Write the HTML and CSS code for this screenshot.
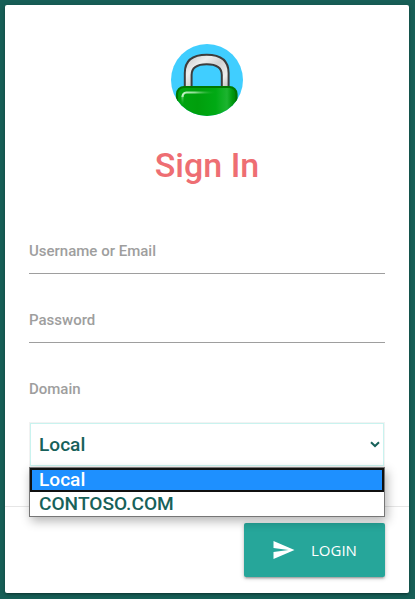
FILE: index.html
```html
<!DOCTYPE html>
<html lang="en">
<head>
<meta charset="utf-8">
<title>Sign In</title>
<link rel="stylesheet" href="styles.css">
</head>
<body>
<main class="card">
  <div class="content">
    <svg class="logo" viewBox="0 0 72 72" aria-hidden="true">
      <defs>
        <clipPath id="round"><circle cx="36" cy="36" r="36"/></clipPath>
        <linearGradient id="steel" x1="0" y1="0" x2="1" y2="1">
          <stop offset="0" stop-color="#c4c4c4"/><stop offset=".3" stop-color="#eee"/><stop offset=".5" stop-color="#d2d2d2"/><stop offset=".75" stop-color="#eee"/><stop offset="1" stop-color="#b5b5b5"/>
        </linearGradient>
        <linearGradient id="green" x1="0" y1="0" x2="1" y2="0">
          <stop offset="0" stop-color="#00a510"/><stop offset=".35" stop-color="#009f0c"/><stop offset=".65" stop-color="#00aa14"/><stop offset=".84" stop-color="#1db430"/><stop offset=".93" stop-color="#009a0e"/><stop offset="1" stop-color="#008008"/>
        </linearGradient>
        <linearGradient id="shine" gradientUnits="userSpaceOnUse" x1="12" y1="0" x2="46" y2="0">
          <stop offset="0" stop-color="#c0f0c4"/><stop offset=".35" stop-color="#8fdc94"/><stop offset="1" stop-color="#00a510" stop-opacity="0"/>
        </linearGradient>
        <linearGradient id="edge" gradientUnits="userSpaceOnUse" x1="0" y1="49" x2="0" y2="62">
          <stop offset="0" stop-color="#c0f0c4"/><stop offset="1" stop-color="#00a510" stop-opacity="0"/>
        </linearGradient>
      </defs>
      <g clip-path="url(#round)">
        <path fill="#40ceff" d="M0 0h72v72H0z"/>
        <path d="M13.800 47V29C13.800 16 22 10.800 35.700 10.800S57.600 16 57.600 29v18h-6.800V31c0-7-5-10.800-15.100-10.800S20.600 24 20.600 31v16z" fill="url(#steel)" stroke="#3d3d3d" stroke-width="2"/>
        <rect x="6" y="43" width="59.500" height="38" rx="7" fill="url(#green)" stroke="#007800" stroke-width="2.200"/>
        <path d="M11.500 53q0-4 4-4.500H46" fill="none" stroke="url(#shine)" stroke-width="2.200"/>
        <path d="M11.500 62V52.500" fill="none" stroke="url(#edge)" stroke-width="2"/>
      </g>
    </svg>
    <h1 class="title">Sign In</h1>
    <div class="field">Username or Email</div>
    <div class="field">Password</div>
    <div class="domain-label">Domain</div>
    <div class="select">
      <span class="value">Local</span>
      <svg class="chevron" viewBox="0 0 10 7" aria-hidden="true"><path d="M1 1.200 5 5 9 1.200" fill="none" stroke="#17615a" stroke-width="2"/></svg>
      <div class="options">
        <div class="option selected">Local</div>
        <div class="option">CONTOSO.COM</div>
      </div>
    </div>
  </div>
  <footer class="action">
    <button class="login">
      <svg class="send" viewBox="2 3 21 18" aria-hidden="true"><path fill="#fff" d="M2.010 21 23 12 2.010 3 2 10l15 2-15 2z"/></svg>
      <span>LOGIN</span>
    </button>
  </footer>
</main>
</body>
</html>
```

FILE: styles.css
```css
* { box-sizing: border-box; }
html { height: 100%; background: #175f57; }
body {
  margin: 0;
  height: 599px;
  padding: 5px 6px 6px 5px;
  overflow: hidden;
  font-family: Roboto, sans-serif;
  font-weight: 500;
}
.card {
  height: 588px;
  display: flex;
  flex-direction: column;
  background: #fff;
  border-radius: 2px;
  box-shadow: 0 2px 2px rgba(0,0,0,.14), 0 3px 1px -2px rgba(0,0,0,.12), 0 1px 5px rgba(0,0,0,.2);
}
.content { height: 501px; padding: 39px 24px 0; }
.logo { display: block; width: 72px; height: 72px; margin: 0 auto; }
.title {
  margin: 29px 0 0;
  height: 41px;
  font-size: 34px;
  font-weight: 500;
  line-height: 40px;
  text-align: center;
  color: #ee6e73;
}
.field {
  height: 46px;
  margin-bottom: 23px;
  border-bottom: 1px solid #9e9e9e;
  font-size: 15px;
  line-height: 46px;
  color: #9e9e9e;
}
.title + .field { margin-top: 42px; }
.domain-label { height: 56px; font-size: 15px; line-height: 46px; color: #9e9e9e; }
.select {
  position: relative;
  display: flex;
  align-items: center;
  justify-content: space-between;
  height: 45px;
  padding: 0 4px 0 9px;
  border: 1px solid #f2f2f2;
  outline: 1px solid #c9f3ef;
  outline-offset: -2px;
  font-size: 19.100px;
  color: #17615a;
}
.value { line-height: 22px; }
.chevron { width: 10px; height: 7px; }
.options {
  position: absolute;
  z-index: 1;
  top: 44px;
  left: -1px;
  width: 356px;
  height: 50px;
  border: 1px solid #767676;
  background: #fff;
  box-shadow: 2px 4px 10px rgba(0,0,0,.3);
}
.option { height: 24px; padding-left: 9px; line-height: 24px; }
.selected {
  padding-left: 7px;
  border: 2px solid #101010;
  background: #1e90ff;
  line-height: 20px;
  color: #fff;
}
.action {
  flex: 1;
  display: flex;
  justify-content: flex-end;
  align-items: flex-start;
  padding: 16px 24px;
  border-top: 1px solid #e6e6e6;
}
.login {
  display: flex;
  align-items: center;
  gap: 16px;
  width: 141px;
  height: 54px;
  padding: 0 0 0 29px;
  border: 0;
  border-radius: 2px;
  background: #26a69a;
  box-shadow: 0 2px 2px rgba(0,0,0,.14), 0 3px 1px -2px rgba(0,0,0,.12), 0 1px 5px rgba(0,0,0,.2);
  color: #fff;
  font: 400 15px "Open Sans", sans-serif;
}
.send { width: 22px; height: 18px; }
```
